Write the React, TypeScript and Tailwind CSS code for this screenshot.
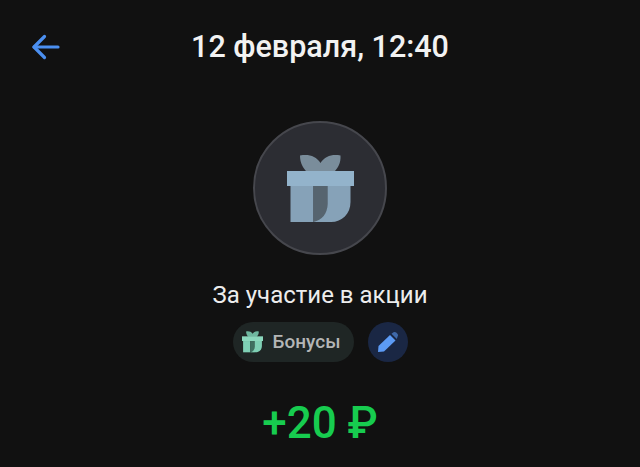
const font = { fontFamily: "Roboto, sans-serif" };

function Gift({ width, light, mid, dark, top }: { width: number; light: string; mid: string; dark: string; top: string }) {
  return (
    <svg width={width} height={(width * 68) / 67} viewBox="0 0 67 68" fill="none">
      <path d="M13 1.5 C22 0 29 2 33.5 9 C38 2 45 0 53.5 1.5 C54 9 51 14 47 18 H20 C16 14 13 9 13 1.5 Z" fill={top} />
      <rect x="0" y="17" width="67" height="15" fill={mid} />
      <path d="M3.5 32 H26.5 V68 H3.5 Z" fill={light} />
      <path d="M26.5 32 H40.5 V68 H26.5 Z" fill={dark} />
      <path d="M40.5 32 H63.5 V48 C63.5 60 55 68 44 68 H26.5 C35 66 40.5 60 40.5 50 Z" fill={light} />
    </svg>
  );
}

export default function App() {
  return (
    <div className="w-[640px] h-[467px] overflow-hidden bg-[#111111] flex flex-col items-center relative" style={font}>
      <header className="w-full h-[94px] flex items-center justify-center relative shrink-0">
        <svg className="absolute left-[31px] top-[33px]" width="29" height="28" viewBox="0 0 29 28" fill="none" stroke="#4b8ff0" strokeWidth="3.2" strokeLinecap="round" strokeLinejoin="round">
          <path d="M3 14 H27" />
          <path d="M13.5 3.5 L3 14 L13.5 24.5" />
        </svg>
        <h1 className="text-[30.5px] leading-[34px] font-medium text-[#f2f2f2]">12 февраля, 12:40</h1>
      </header>
      <div className="mt-[27px] w-[134px] h-[134px] rounded-full bg-[#2c2d33] border-2 border-[#46474d] flex items-center justify-center shrink-0">
        <Gift width={67} light="#86a2b8" mid="#93b3cb" dark="#56646f" top="#7a8d9b" />
      </div>
      <p className="mt-[26px] text-[24px] leading-[28px] text-[#ededed]">За участие в акции</p>
      <div className="mt-[13px] flex items-center gap-[14px]">
        <div className="h-[40px] w-[121px] rounded-full bg-[#1f2625] flex items-center pl-[9px] gap-[10px]">
          <Gift width={21} light="#7fd0b5" mid="#8bd8bd" dark="#3f6f60" top="#6fb8a0" />
          <span className="text-[19px] leading-[24px] font-medium text-[#b4b6b6]">Бонусы</span>
        </div>
        <div className="w-[40px] h-[40px] rounded-full bg-[#1a2744] flex items-center justify-center">
          <svg width="22" height="22" viewBox="0 0 22 22">
            <path d="M1 21 L1.5 15 L13 4 L18.5 9.5 L7 20.5 Z" fill="#5c9bf5" />
            <path d="M14.5 2.7 L16.5 1.3 Q18 0.5 19.2 1.6 L20.6 3 Q21.6 4.2 20.6 5.6 L19.8 8 Z" fill="#3f69aa" />
          </svg>
        </div>
      </div>
      <p className="mt-[35px] text-[44px] leading-[52px] font-medium text-[#17cc4f]">+20 ₽</p>
    </div>
  );
}
